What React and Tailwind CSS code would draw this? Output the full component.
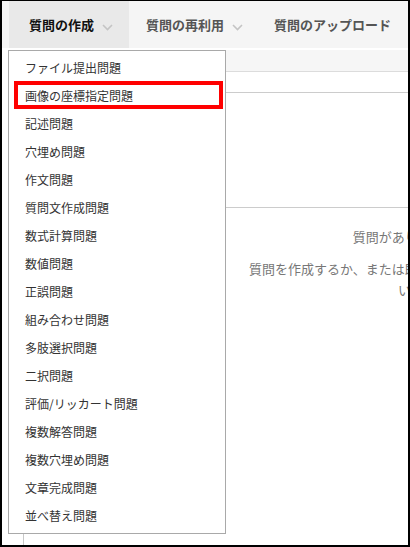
import React from 'react';

const items = [
    'ファイル提出問題',
    '画像の座標指定問題',
    '記述問題',
    '穴埋め問題',
    '作文問題',
    '質問文作成問題',
    '数式計算問題',
    '数値問題',
    '正誤問題',
    '組み合わせ問題',
    '多肢選択問題',
    '二択問題',
    '評価/リッカート問題',
    '複数解答問題',
    '複数穴埋め問題',
    '文章完成問題',
    '並べ替え問題',
];

const Chevron = () => (
    <svg width="11" height="7" viewBox="0 0 11 7" className="mt-[6px] shrink-0">
        <polyline points="1,1 5.5,5.5 10,1" fill="none" stroke="#c4c4c4" strokeWidth="1.6" />
    </svg>
);

const Tab = ({ label, active, chevron, className = '' }) => (
    <div className={`flex h-full shrink-0 items-center gap-2 ${className} ${active ? 'bg-[#e9e9e9] text-[#111]' : 'text-[#555]'}`}>
        <span className="whitespace-nowrap text-[13px] font-bold">{label}</span>
        {chevron && <Chevron />}
    </div>
);

export default function App() {
    return (
        <div
            className="relative w-[410px] h-[547px] overflow-hidden bg-white border-t border-l-2 border-r-2 border-b-2 border-black flex flex-col"
            style={{ fontFamily: '"Noto Sans CJK JP", "Noto Sans", sans-serif' }}
        >
            <div className="flex h-[47px] shrink-0 bg-[#f5f5f5] pl-[7px]">
                <Tab label="質問の作成" active chevron className="pl-[20px] pr-[16px]" />
                <Tab label="質問の再利用" chevron className="pl-[17px] pr-[15px]" />
                <Tab label="質問のアップロード" className="pl-[16px] pr-[16px]" />
            </div>

            <div className="relative flex-1">
                <div className="ml-[21px] mt-[2px] h-full w-[775px] border-l border-[#c8c8c8]">
                    <div className="h-[22px] bg-[#f6f6f6] border-b border-[#dcdcdc]" />
                    <div className="h-[21px] border-b border-[#cccccc]" />
                    <div className="h-[115px] border-b border-[#cccccc]" />
                    <div className="pt-[18px] text-center text-[13px] leading-[21px] text-[#777]">
                        <p>質問がありません。</p>
                        <p className="mt-[11px]">
                            質問を作成するか、または既存の質問を追加してくださ
                            <br />
                            い。
                        </p>
                    </div>
                </div>

                <div className="absolute left-[6px] top-[2px] w-[218px] border border-[#a9a9a9] bg-white py-[3px]">
                    {items.map((item) => (
                        <div key={item} className="flex h-[28px] items-center px-[16px] text-[12px] text-[#333]">
                            {item}
                        </div>
                    ))}
                </div>
            </div>

            <div className="absolute left-[12px] top-[80px] h-[28px] w-[209px] border-4 border-[#ff0000]" />
        </div>
    );
}
